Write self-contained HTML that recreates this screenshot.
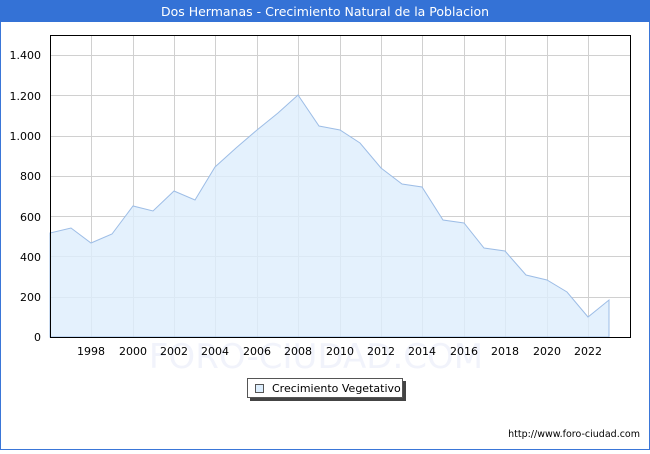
<!DOCTYPE html>
<html><head><meta charset="utf-8"><style>
body{margin:0;width:650px;height:450px;overflow:hidden;background:#fff;font-family:"DejaVu Sans","Liberation Sans",sans-serif;}
</style></head><body>
<svg width="650" height="450" viewBox="0 0 650 450" xmlns="http://www.w3.org/2000/svg" font-family="DejaVu Sans, Liberation Sans, sans-serif">
<rect x="0.5" y="0.5" width="649" height="449" fill="#fff" stroke="#3a76d8" stroke-width="1"/>
<rect x="0" y="0" width="650" height="22" fill="#3472d6"/>
<text x="325" y="16" text-anchor="middle" fill="#fff" font-size="12.5">Dos Hermanas - Crecimiento Natural de la Poblacion</text>
<g stroke="#d0d0d0" stroke-width="1">
<line x1="50" y1="55.5" x2="630" y2="55.5"/><line x1="50" y1="95.5" x2="630" y2="95.5"/><line x1="50" y1="136.5" x2="630" y2="136.5"/><line x1="50" y1="176.5" x2="630" y2="176.5"/><line x1="50" y1="216.5" x2="630" y2="216.5"/><line x1="50" y1="256.5" x2="630" y2="256.5"/><line x1="50" y1="297.5" x2="630" y2="297.5"/>
<line x1="91.5" y1="35" x2="91.5" y2="337"/><line x1="133.5" y1="35" x2="133.5" y2="337"/><line x1="174.5" y1="35" x2="174.5" y2="337"/><line x1="215.5" y1="35" x2="215.5" y2="337"/><line x1="257.5" y1="35" x2="257.5" y2="337"/><line x1="298.5" y1="35" x2="298.5" y2="337"/><line x1="340.5" y1="35" x2="340.5" y2="337"/><line x1="381.5" y1="35" x2="381.5" y2="337"/><line x1="422.5" y1="35" x2="422.5" y2="337"/><line x1="464.5" y1="35" x2="464.5" y2="337"/><line x1="505.5" y1="35" x2="505.5" y2="337"/><line x1="547.5" y1="35" x2="547.5" y2="337"/><line x1="588.5" y1="35" x2="588.5" y2="337"/>
</g>
<text x="316" y="368" text-anchor="middle" font-size="34" fill="#f1f3fb">FORO-CIUDAD.COM</text>
<polygon fill="#ddeefd" fill-opacity="0.8" stroke="#9dbde6" stroke-width="1" points="50,337 50,233 71,228 91,243 112,234 133,206 153,211 174,191 195,200 215,167 236,148 257,130 278,113 298,95 319,126 340,130 360,143 381,168 402,184 422,187 443,220 464,223 484,248 505,251 526,275 547,280 567,292 588,317 609,300 609,337"/>
<rect x="50.5" y="35.5" width="580" height="302" fill="none" stroke="#000" stroke-width="1"/>
<g font-size="11" fill="#000" text-anchor="end">
<text x="41" y="59">1.400</text><text x="41" y="100">1.200</text><text x="41" y="140">1.000</text><text x="41" y="180">800</text><text x="41" y="221">600</text><text x="41" y="261">400</text><text x="41" y="301">200</text><text x="41" y="341">0</text>
</g>
<g font-size="11" fill="#000" text-anchor="middle">
<text x="91" y="355">1998</text><text x="133" y="355">2000</text><text x="174" y="355">2002</text><text x="215" y="355">2004</text><text x="257" y="355">2006</text><text x="298" y="355">2008</text><text x="340" y="355">2010</text><text x="381" y="355">2012</text><text x="422" y="355">2014</text><text x="464" y="355">2016</text><text x="505" y="355">2018</text><text x="547" y="355">2020</text><text x="588" y="355">2022</text>
</g>
<rect x="250" y="381" width="156" height="20" fill="#444"/>
<rect x="247.5" y="378.5" width="155" height="19" fill="#fff" stroke="#555"/>
<rect x="255.5" y="384.5" width="8" height="8" fill="#ddeefd" stroke="#555"/>
<text x="272" y="392" font-size="11" fill="#000">Crecimiento Vegetativo</text>
<text x="640" y="437" text-anchor="end" font-size="9.5" fill="#000">http://www.foro-ciudad.com</text>
</svg>
</body></html>
